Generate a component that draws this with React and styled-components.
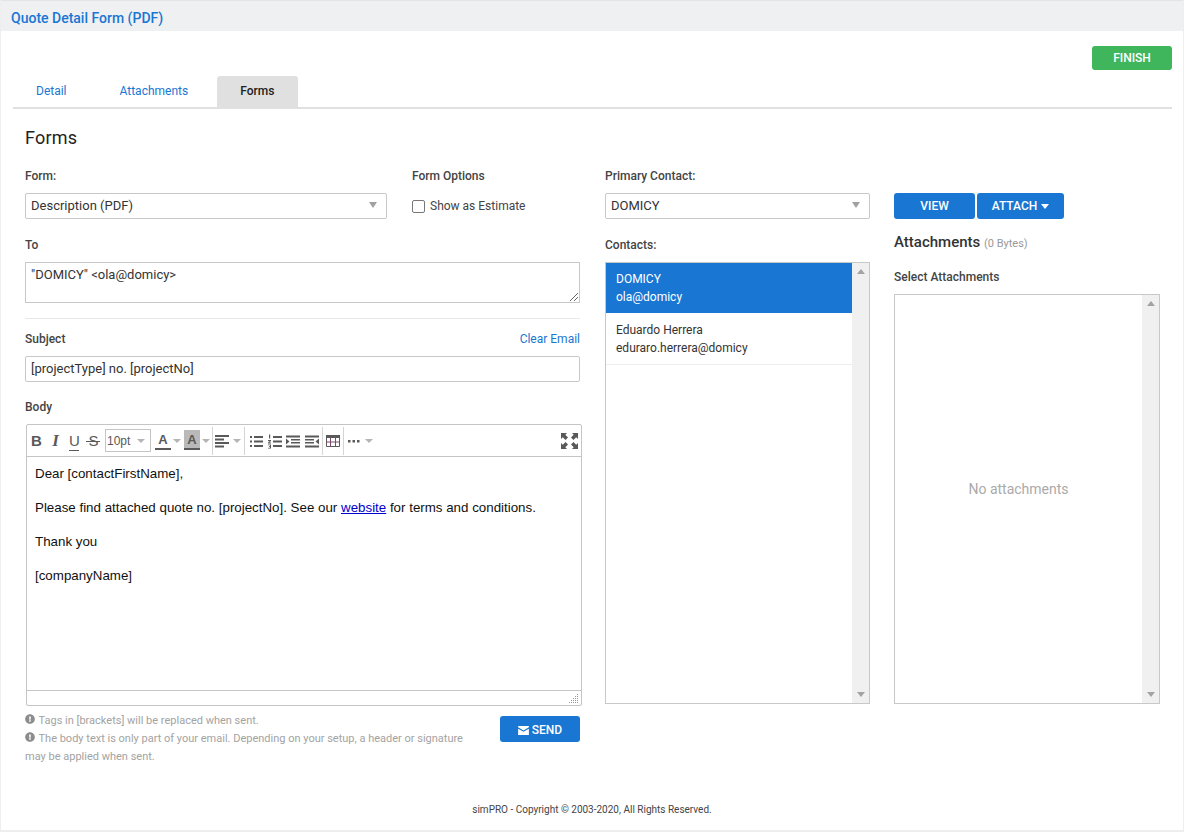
import React from "react";
import styled, { createGlobalStyle } from "styled-components";
import { FaExclamationCircle } from "react-icons/fa";

const GlobalStyle = createGlobalStyle`
  html, body { margin: 0; padding: 0; background: #fff; }
  body { font-family: Roboto, "Liberation Sans", sans-serif; font-size: 12px; color: #333; }
  * { box-sizing: border-box; }
`;

const ToolSvg = ({ children, w = 14 }) => (
  <svg width={w} height="16" viewBox={`0 0 ${w} 16`} fill="#595959">{children}</svg>
);

const App = () => {
  return (
    <Page>
      <GlobalStyle />
      <TitleBar>Quote Detail Form (PDF)</TitleBar>
      <Main>
        <ActionRow>
          <FinishButton>FINISH</FinishButton>
        </ActionRow>
        <Tabs>
          <Tab>Detail</Tab>
          <Tab>Attachments</Tab>
          <Tab $active>Forms</Tab>
        </Tabs>
        <Content>
          <Heading>Forms</Heading>
          <Columns>
            <LeftColumn>
              <TopFields>
                <div>
                  <Label>Form:</Label>
                  <Select>
                    Description (PDF)
                    <SelectArrow />
                  </Select>
                </div>
                <div>
                  <Label>Form Options</Label>
                  <CheckRow>
                    <CheckBox />
                    Show as Estimate
                  </CheckRow>
                </div>
              </TopFields>
              <Label>To</Label>
              <ToBox>
                "DOMICY" &lt;ola@domicy&gt;
                <Grip width="8" height="8" viewBox="0 0 8 8">
                  <path d="M8 0 0 8M8 4 4 8" stroke="#666" strokeWidth="1" fill="none" />
                </Grip>
              </ToBox>
              <Divider />
              <SubjectHead>
                <Label>Subject</Label>
                <ClearLink>Clear Email</ClearLink>
              </SubjectHead>
              <TextBox>[projectType] no. [projectNo]</TextBox>
              <BodyLabel>Body</BodyLabel>
              <Editor>
                <Toolbar>
                  <BoldTool>B</BoldTool>
                  <ItalicTool>I</ItalicTool>
                  <UnderlineTool>U</UnderlineTool>
                  <StrikeTool>S</StrikeTool>
                  <FontSize>
                    10pt
                    <Caret />
                  </FontSize>
                  <ColorLetter>A</ColorLetter>
                  <Caret $gap={2} />
                  <ColorLetter $shaded>A</ColorLetter>
                  <Caret $gap={2} />
                  <ToolSep $left={2} />
                  <IconCell $left={2}>
                    <ToolSvg>
                      <path d="M0 2h14v2H0zM0 5.500h9v2H0zM0 9h14v2H0zM0 12.500h9v2H0z" />
                    </ToolSvg>
                  </IconCell>
                  <Caret $gap={4} />
                  <ToolSep $left={3} />
                  <IconCell $left={4}>
                    <ToolSvg>
                      <path d="M1 3h2v2H1zM5 3h9v2H5zM1 7.500h2v2H1zM5 7.500h9v2H5zM1 12h2v2H1zM5 12h9v2H5z" />
                    </ToolSvg>
                  </IconCell>
                  <IconCell $left={5}>
                    <ToolSvg>
                      <path d="M5 3h9v2H5zM5 7.500h9v2H5zM5 12h9v2H5zM1 1.500h1.200v4H1zM0 7h3v1L1.300 9.500H3v1H0v-1L1.700 8H0zM0 11.500h3v4H0v-.8h2v-.8H1v-.7h1v-.9H0z" />
                    </ToolSvg>
                  </IconCell>
                  <IconCell $left={4}>
                    <ToolSvg>
                      <path d="M0 2.500h14v2H0zM5 6h9v1.500H5zM5 9h9v1.500H5zM0 12.500h14v2H0zM0 5.500l3.500 3-3.500 3z" />
                    </ToolSvg>
                  </IconCell>
                  <IconCell $left={5}>
                    <ToolSvg>
                      <path d="M0 2.500h14v2H0zM0 6h9v1.500H0zM0 9h9v1.500H0zM0 12.500h14v2H0zM14 5.500l-3.500 3 3.500 3z" />
                    </ToolSvg>
                  </IconCell>
                  <ToolSep $left={3} />
                  <IconCell $left={3}>
                    <ToolSvg>
                      <path d="M.5 2.500h13v11H.500z" fill="none" stroke="#595959" />
                      <path d="M0 2h14v3H0z" />
                      <path d="M0 9h14M4.500 5v8.500M9.500 5v8.500" stroke="#7a4a6a" fill="none" />
                    </ToolSvg>
                  </IconCell>
                  <ToolSep $left={3} />
                  <IconCell $left={4}>
                    <ToolSvg w={12}>
                      <path d="M0 7h2.500v2.500H0zM4.500 7H7v2.500H4.500zM9 7h2.500v2.500H9z" />
                    </ToolSvg>
                  </IconCell>
                  <Caret $gap={5} />
                  <FullscreenIcon width="17" height="16" viewBox="0 0 17 16" fill="#595959">
                    <path d="M0 0h6L4.300 1.700 7 4.400 4.500 6.900 1.800 4.200 0 6zM17 0h-6l1.700 1.700L10 4.400l2.500 2.500 2.700-2.700L17 6zM0 16h6l-1.700-1.700L7 11.600 4.500 9.100l-2.700 2.700L0 10zM17 16h-6l1.700-1.700-2.700-2.700 2.500-2.500 2.700 2.700L17 10z" />
                  </FullscreenIcon>
                </Toolbar>
                <EditorBody>
                  <p>Dear [contactFirstName],</p>
                  <p>
                    Please find attached quote no. [projectNo]. See our <EditorLink>website</EditorLink> for terms and conditions.
                  </p>
                  <p>Thank you</p>
                  <p>[companyName]</p>
                </EditorBody>
                <StatusBar>
                  <ResizeGrip width="10" height="10" viewBox="0 0 10 10" fill="#999">
                    <path d="M8 0h1v1H8zM6 2h1v1H6zM8 2h1v1H8zM4 4h1v1H4zM6 4h1v1H6zM8 4h1v1H8zM2 6h1v1H2zM4 6h1v1H4zM6 6h1v1H6zM8 6h1v1H8zM0 8h1v1H0zM2 8h1v1H2zM4 8h1v1H4zM6 8h1v1H6zM8 8h1v1H8z" />
                  </ResizeGrip>
                </StatusBar>
              </Editor>
              <SendRow>
                <Notes>
                  <div>
                    <NoteIcon /> Tags in [brackets] will be replaced when sent.
                  </div>
                  <div>
                    <NoteIcon /> The body text is only part of your email. Depending on your setup, a header or signature may be applied when sent.
                  </div>
                </Notes>
                <SendButton>
                  <svg width="11" height="9" viewBox="0 0 12 10" fill="#fff">
                    <path d="M0 0h12v1.500L6 5 0 1.500zM0 3l6 3.500L12 3v7H0z" />
                  </svg>
                  SEND
                </SendButton>
              </SendRow>
            </LeftColumn>
            <div>
              <Label>Primary Contact:</Label>
              <Select>
                DOMICY
                <SelectArrow />
              </Select>
              <ContactsLabel>Contacts:</ContactsLabel>
              <ListBox $height={442}>
                <ListItems>
                  <Contact $selected>
                    <div>DOMICY</div>
                    <div>ola@domicy</div>
                  </Contact>
                  <Contact>
                    <div>Eduardo Herrera</div>
                    <div>eduraro.herrera@domicy</div>
                  </Contact>
                </ListItems>
                <Scrollbar>
                  <ScrollUp />
                  <ScrollDown />
                </Scrollbar>
              </ListBox>
            </div>
            <RightColumn>
              <ButtonRow>
                <BlueButton $width={81}>VIEW</BlueButton>
                <BlueButton $width={87}>
                  ATTACH <ButtonCaret />
                </BlueButton>
              </ButtonRow>
              <AttachTitle>
                Attachments <small>(0 Bytes)</small>
              </AttachTitle>
              <SelectLabel>Select Attachments</SelectLabel>
              <ListBox $height={410}>
                <EmptyList>No attachments</EmptyList>
                <Scrollbar>
                  <ScrollUp />
                  <ScrollDown />
                </Scrollbar>
              </ListBox>
            </RightColumn>
          </Columns>
        </Content>
      </Main>
      <Footer>simPRO - Copyright © 2003-2020, All Rights Reserved.</Footer>
    </Page>
  );
};

const Page = styled.div`
  width: 1184px;
  height: 832px;
  display: flex;
  flex-direction: column;
  border-left: 1px solid #eee;
  border-right: 1px solid #eee;
  border-bottom: 2px solid #eee;
  overflow: hidden;
`;

const TitleBar = styled.div`
  height: 31px;
  margin: 0 -1px;
  background: #eff0f2;
  color: #1976d2;
  font-size: 14px;
  font-weight: 500;
  line-height: 34px;
  padding-left: 11px;
  border-top: 1px solid #e4e4e4;
`;

const Main = styled.div`
  flex: 1;
  padding: 15px 11px 0 12px;
`;

const ActionRow = styled.div`
  display: flex;
  justify-content: flex-end;
  margin-bottom: 6px;
`;

const FinishButton = styled.button`
  width: 80px;
  height: 24px;
  border: 0;
  border-radius: 3px;
  background: #3fb55c;
  color: #fff;
  font: 500 12px Roboto, sans-serif;
`;

const Tabs = styled.div`
  height: 33px;
  display: flex;
  border-bottom: 2px solid #e0e0e0;
`;

const Tab = styled.div`
  padding: 0 ${(p) => (p.$active ? "24px" : "23px")} 0 23px;
  height: 31px;
  line-height: 31px;
  font-size: 12px;
  border-radius: 3px 3px 0 0;
  color: ${(p) => (p.$active ? "#222" : "#1976d2")};
  font-weight: ${(p) => (p.$active ? 500 : 400)};
  background: ${(p) => (p.$active ? "#e0e0e0" : "transparent")};
  &:nth-child(2) { margin-left: 7px; margin-right: 6px; }
`;

const Content = styled.div`
  padding: 0 0 0 12px;
`;

const Heading = styled.h2`
  margin: 18px 0 20px;
  font-size: 18px;
  line-height: 22px;
  font-weight: 400;
  letter-spacing: 0.2px;
  color: #222;
`;

const Columns = styled.div`
  display: grid;
  grid-template-columns: 555px 265px 265px;
  column-gap: 25px;
`;

const LeftColumn = styled.div`
  display: flex;
  flex-direction: column;
`;

const TopFields = styled.div`
  display: grid;
  grid-template-columns: 362px 1fr;
  column-gap: 25px;
  margin-bottom: 19px;
`;

const Label = styled.div`
  height: 14px;
  line-height: 14px;
  margin-bottom: 10px;
  font-weight: 500;
  font-size: 12px;
  color: #444;
`;

const Select = styled.div`
  position: relative;
  height: 26px;
  line-height: 24px;
  padding-left: 5px;
  border: 1px solid #c8c8c8;
  border-radius: 2px;
  font-size: 13px;
  color: #333;
`;

const SelectArrow = styled.span`
  position: absolute;
  right: 9px;
  top: 8px;
  border-left: 4px solid transparent;
  border-right: 4px solid transparent;
  border-top: 6px solid #a0a0a0;
`;

const CheckRow = styled.div`
  display: flex;
  align-items: center;
  gap: 5px;
  height: 26px;
  font-size: 12px;
  color: #444;
`;

const CheckBox = styled.span`
  width: 13px;
  height: 13px;
  border: 1px solid #777;
  border-radius: 2px;
  margin-top: 1px;
`;

const ToBox = styled.div`
  position: relative;
  height: 41px;
  border: 1px solid #c8c8c8;
  padding: 4px 5px;
  font-size: 13px;
  line-height: 15px;
  color: #333;
`;

const Grip = styled.svg`
  position: absolute;
  right: 1px;
  bottom: 1px;
`;

const Divider = styled.div`
  height: 1px;
  background: #e8e8e8;
  margin: 15px 0 13px;
`;

const SubjectHead = styled.div`
  display: flex;
  justify-content: space-between;
`;

const ClearLink = styled.a`
  color: #1976d2;
  font-size: 12px;
  line-height: 14px;
`;

const TextBox = styled.div`
  height: 26px;
  border: 1px solid #c8c8c8;
  border-radius: 2px;
  padding-left: 5px;
  line-height: 24px;
  font-size: 13px;
  color: #333;
`;

const BodyLabel = styled(Label)`
  margin: 18px 0 10px;
`;

const Editor = styled.div`
  width: 556px;
  margin-left: 1px;
  height: 282px;
  display: flex;
  flex-direction: column;
  border: 1px solid #c5c5c5;
  border-radius: 2px;
`;

const Toolbar = styled.div`
  height: 32px;
  flex: none;
  display: flex;
  align-items: center;
  border-bottom: 1px solid #c5c5c5;
`;

const FormatTool = styled.div`
  position: relative;
  width: 19px;
  text-align: center;
  color: #595959;
  font-family: "Liberation Sans", sans-serif;
  font-size: 15px;
  line-height: 16px;
`;

const BoldTool = styled(FormatTool)`
  font-weight: 700;
`;

const ItalicTool = styled(FormatTool)`
  font-family: "Liberation Serif", serif;
  font-style: italic;
  font-weight: 700;
  font-size: 17px;
`;

const UnderlineTool = styled(FormatTool)`
  &::after {
    content: "";
    position: absolute;
    left: 4px;
    right: 5px;
    bottom: -2px;
    height: 1px;
    background: #595959;
  }
`;

const StrikeTool = styled(FormatTool)`
  &::after {
    content: "";
    position: absolute;
    left: 2px;
    right: 3px;
    top: 8px;
    height: 1px;
    background: #595959;
  }
`;

const IconCell = styled.div`
  display: flex;
  align-items: center;
  height: 16px;
  margin-left: ${(p) => p.$left}px;
`;

const ToolSep = styled.div`
  width: 1px;
  height: 28px;
  margin-left: ${(p) => p.$left}px;
  background: #d4d4d4;
`;

const Caret = styled.span`
  flex: none;
  border-left: 4px solid transparent;
  border-right: 4px solid transparent;
  border-top: 4px solid #b5b5b5;
  margin-left: ${(p) => p.$gap || 0}px;
`;

const FontSize = styled.div`
  width: 46px;
  height: 23px;
  margin-left: 2px;
  margin-right: 4px;
  border: 1px solid #c5c5c5;
  padding: 0 5px 0 1px;
  display: flex;
  align-items: center;
  justify-content: space-between;
  font-family: "Liberation Sans", sans-serif;
  font-size: 12px;
  color: #595959;
`;

const ColorLetter = styled.span`
  flex: none;
  width: 16px;
  height: 20px;
  margin-bottom: 2px;
  text-align: center;
  font: 700 13px/19px "Liberation Sans", sans-serif;
  color: #595959;
  border-bottom: 2px solid #595959;
  background: ${(p) => (p.$shaded ? "#b9b9b9" : "transparent")};
  & + span + & { margin-left: 3px; }
`;

const FullscreenIcon = styled.svg`
  margin-left: auto;
  margin-right: 3px;
`;

const EditorBody = styled.div`
  flex: 1;
  padding: 9px 8px 0;
  font-family: "Liberation Sans", sans-serif;
  font-size: 10pt;
  color: #111;
  p { margin: 0 0 19px; line-height: 15px; }
`;

const EditorLink = styled.a`
  color: #0000cc;
  text-decoration: underline;
`;

const StatusBar = styled.div`
  position: relative;
  flex: none;
  height: 15px;
  border-top: 1px solid #c5c5c5;
`;

const ResizeGrip = styled.svg`
  position: absolute;
  right: 2px;
  bottom: 1px;
`;

const SendRow = styled.div`
  display: flex;
  justify-content: space-between;
  align-items: flex-start;
  margin-top: 10px;
`;

const Notes = styled.div`
  width: 445px;
  margin-top: -4px;
  font-size: 11px;
  line-height: 18px;
  color: #a3a3a3;
`;

const NoteIcon = styled(FaExclamationCircle)`
  color: #8c8c8c;
  width: 10px;
  height: 10px;
  margin-right: 1px;
  vertical-align: 0;
`;

const SendButton = styled.button`
  width: 80px;
  height: 26px;
  padding: 2px 0 0;
  display: flex;
  align-items: center;
  justify-content: center;
  gap: 3px;
  border: 0;
  border-radius: 3px;
  background: #1976d2;
  color: #fff;
  font: 500 12px Roboto, sans-serif;
`;

const ContactsLabel = styled(Label)`
  margin: 19px 0 10px;
`;

const ListBox = styled.div`
  height: ${(p) => p.$height}px;
  display: flex;
  border: 1px solid #c8c8c8;
`;

const ListItems = styled.div`
  flex: 1;
`;

const Contact = styled.div`
  height: ${(p) => (p.$selected ? "50px" : "52px")};
  padding: ${(p) => (p.$selected ? "7px" : "8px")} 10px;
  line-height: 18px;
  font-size: 12px;
  background: ${(p) => (p.$selected ? "#1976d2" : "#fff")};
  color: ${(p) => (p.$selected ? "#fff" : "#333")};
  border-bottom: ${(p) => (p.$selected ? "0" : "1px solid #eee")};
`;

const Scrollbar = styled.div`
  position: relative;
  width: 17px;
  background: #f0f0f0;
`;

const ScrollUp = styled.span`
  position: absolute;
  top: 6px;
  left: 5px;
  border-left: 4px solid transparent;
  border-right: 4px solid transparent;
  border-bottom: 5px solid #a3a3a3;
`;

const ScrollDown = styled.span`
  position: absolute;
  bottom: 6px;
  left: 5px;
  border-left: 4px solid transparent;
  border-right: 4px solid transparent;
  border-top: 5px solid #a3a3a3;
`;

const RightColumn = styled.div`
  padding-top: 24px;
  margin-left: -1px;
`;

const ButtonRow = styled.div`
  display: flex;
  gap: 2px;
`;

const BlueButton = styled.button`
  width: ${(p) => p.$width}px;
  height: 26px;
  border: 0;
  border-radius: 3px;
  background: #1976d2;
  color: #fff;
  font: 500 12px Roboto, sans-serif;
`;

const ButtonCaret = styled.span`
  display: inline-block;
  margin-left: 1px;
  vertical-align: 1px;
  border-left: 4px solid transparent;
  border-right: 4px solid transparent;
  border-top: 5px solid #fff;
`;

const AttachTitle = styled.div`
  margin-top: 14px;
  font-size: 15px;
  font-weight: 500;
  line-height: 18px;
  color: #333;
  small { font-size: 11px; font-weight: 400; color: #999; }
`;

const SelectLabel = styled(Label)`
  margin: 17px 0 10px;
`;

const EmptyList = styled.div`
  flex: 1;
  display: flex;
  align-items: center;
  justify-content: center;
  padding-bottom: 20px;
  color: #aaa;
  font-size: 14px;
`;

const Footer = styled.div`
  height: 27px;
  text-align: center;
  font-size: 10px;
  color: #444;
  line-height: 14px;
`;

export default App;
